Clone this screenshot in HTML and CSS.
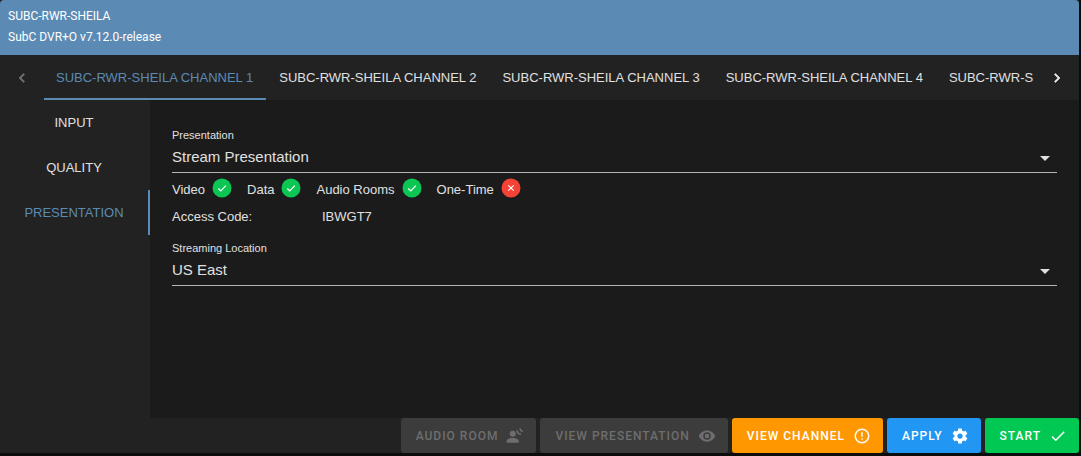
FILE: index.html
```html
<!DOCTYPE html>
<html lang="en">
<head>
<meta charset="utf-8">
<title>SUBC-RWR-SHEILA</title>
<link rel="stylesheet" href="styles.css">
</head>
<body>
<div class="app">
  <header class="header">
    <div>SUBC-RWR-SHEILA</div>
    <div>SubC DVR+O v7.12.0-release</div>
  </header>
  <nav class="channels" aria-label="Channels">
    <button class="arrow" type="button" aria-label="Previous channels" disabled>
      <svg class="icon arrow-icon" viewBox="0 0 24 24"><path d="M15.4 16.6 10.8 12l4.6-4.6L14 6l-6 6 6 6z"/></svg>
    </button>
    <div class="tabs">
      <button class="tab tab-active" type="button">SUBC-RWR-SHEILA CHANNEL 1</button>
      <button class="tab" type="button">SUBC-RWR-SHEILA CHANNEL 2</button>
      <button class="tab" type="button">SUBC-RWR-SHEILA CHANNEL 3</button>
      <button class="tab" type="button">SUBC-RWR-SHEILA CHANNEL 4</button>
      <button class="tab" type="button">SUBC-RWR-S</button>
    </div>
    <button class="arrow" type="button" aria-label="Next channels">
      <svg class="icon arrow-icon" viewBox="0 0 24 24"><path d="M8.6 16.6 13.2 12 8.6 7.4 10 6l6 6-6 6z"/></svg>
    </button>
  </nav>
  <div class="body">
    <nav class="side" aria-label="Sections">
      <button class="side-item" type="button">INPUT</button>
      <button class="side-item" type="button">QUALITY</button>
      <button class="side-item side-active" type="button">PRESENTATION</button>
    </nav>
    <main class="content">
      <div class="field">
        <label class="label" for="presentation">Presentation</label>
        <select class="select" id="presentation"><option>Stream Presentation</option></select>
        <svg class="caret" viewBox="0 0 10 5"><path d="M0 0h10L5 5z"/></svg>
      </div>
      <div class="flags">
        <span class="flag">Video <svg class="badge" viewBox="0 0 20 20"><circle class="yes" cx="10" cy="10" r="9.5"/><path class="mark" d="m6.300 10.500 2.500 2.500 5-5.300"/></svg></span>
        <span class="flag">Data <svg class="badge" viewBox="0 0 20 20"><circle class="yes" cx="10" cy="10" r="9.5"/><path class="mark" d="m6.300 10.500 2.500 2.500 5-5.300"/></svg></span>
        <span class="flag">Audio Rooms <svg class="badge" viewBox="0 0 20 20"><circle class="yes" cx="10" cy="10" r="9.5"/><path class="mark" d="m6.300 10.500 2.500 2.500 5-5.300"/></svg></span>
        <span class="flag">One-Time <svg class="badge" viewBox="0 0 20 20"><circle class="no" cx="10" cy="10" r="9.5"/><path class="mark" d="m7.300 7.300 5.400 5.400m0-5.400-5.400 5.400"/></svg></span>
      </div>
      <div class="code"><span class="code-name">Access Code:</span><span>IBWGT7</span></div>
      <div class="field">
        <label class="label" for="location">Streaming Location</label>
        <select class="select" id="location"><option>US East</option></select>
        <svg class="caret" viewBox="0 0 10 5"><path d="M0 0h10L5 5z"/></svg>
      </div>
    </main>
  </div>
  <footer class="actions">
    <button class="action" type="button" disabled>AUDIO ROOM
      <svg class="icon" viewBox="0 0 24 24"><circle cx="9" cy="9" r="4"/><path d="M1 21v-2.500C1 15.800 5 14.500 9 14.500s8 1.300 8 4V21z"/><path class="wave" d="M14.500 4.500a7 7 0 0 0 5.500 5.500M18.500 2a5 5 0 0 0 4 4"/></svg>
    </button>
    <button class="action" type="button" disabled>VIEW PRESENTATION
      <svg class="icon" viewBox="0 0 24 24"><path d="M12 9a3 3 0 1 0 0 6 3 3 0 0 0 0-6m0 8a5 5 0 1 1 0-10 5 5 0 0 1 0 10m0-12.500C7 4.500 2.730 7.610 1 12c1.730 4.390 6 7.500 11 7.500s9.270-3.110 11-7.500c-1.730-4.390-6-7.500-11-7.500"/></svg>
    </button>
    <button class="action orange" type="button">VIEW CHANNEL
      <svg class="icon" viewBox="0 0 24 24"><path d="M11 15h2v2h-2zm0-8h2v6h-2zm1-5a10 10 0 1 0 0 20 10 10 0 0 0 0-20m0 18a8 8 0 1 1 0-16 8 8 0 0 1 0 16"/></svg>
    </button>
    <button class="action blue" type="button">APPLY
      <svg class="icon" viewBox="0 0 24 24"><path d="M12 15.500A3.500 3.500 0 0 1 8.500 12 3.500 3.500 0 0 1 12 8.500a3.500 3.500 0 0 1 3.500 3.500 3.500 3.500 0 0 1-3.500 3.500m7.430-2.530c.04-.32.070-.64.070-.97s-.03-.66-.07-1l2.110-1.630c.19-.15.240-.42.120-.64l-2-3.460c-.12-.22-.39-.31-.61-.22l-2.490 1c-.52-.39-1.060-.73-1.690-.98l-.37-2.650A.506.506 0 0 0 14 2h-4c-.25 0-.46.180-.5.420l-.37 2.650c-.63.250-1.170.590-1.690.980l-2.490-1c-.22-.09-.49 0-.61.220l-2 3.460c-.13.220-.07.490.120.640L4.570 11c-.04.340-.07.670-.07 1s.03.650.070.970l-2.110 1.660c-.19.150-.25.420-.12.640l2 3.460c.12.220.390.300.610.220l2.490-1.010c.52.400 1.060.740 1.690.990l.37 2.650c.04.240.250.420.500.420h4c.25 0 .460-.18.500-.42l.37-2.650c.63-.26 1.170-.59 1.690-.99l2.490 1.010c.22.080.490 0 .610-.22l2-3.460c.12-.22.070-.49-.12-.64z"/></svg>
    </button>
    <button class="action green" type="button">START
      <svg class="icon" viewBox="0 0 24 24"><path d="M21 7 9 19l-5.500-5.500 1.410-1.410L9 16.170 19.590 5.590z"/></svg>
    </button>
  </footer>
</div>
</body>
</html>
```
FILE: styles.css
```css
* {
  box-sizing: border-box;
}

body {
  margin: 0;
  padding: 0 2px 3px 0;
  min-height: 100vh;
  display: flex;
  background: #0c0c0c;
  color: #e0e0e0;
  font: 13px/20px "Liberation Sans", Arial, sans-serif;
}

button,
select {
  margin: 0;
  padding: 0;
  border: 0;
  border-radius: 0;
  background: none;
  color: inherit;
  font: inherit;
}

.app {
  flex: 1;
  min-width: 0;
  display: flex;
  flex-direction: column;
  background: #222;
}

.header {
  padding: 6px 8px 7px;
  background: #5b8bb4;
  border-radius: 4px 4px 0 0;
  color: #fff;
  font: 12px/21px Roboto, sans-serif;
}

.channels {
  display: flex;
  height: 45px;
}

.arrow {
  flex: 0 0 44px;
  display: flex;
  align-items: center;
  justify-content: center;
}

.arrow:disabled {
  color: #6c6c6c;
}

.icon {
  width: 18px;
  height: 18px;
  fill: currentColor;
}

.arrow-icon {
  stroke: currentColor;
}

.tabs {
  flex: 1;
  min-width: 0;
  display: flex;
  overflow: hidden;
}

.tab {
  flex: none;
  padding: 2px 13px 0 12px;
  border-bottom: 2px solid transparent;
  white-space: nowrap;
}

.tab-active {
  border-color: #5b8bb4;
  color: #5b8bb4;
}

.tab + .tab {
  margin-left: 1px;
}

.body {
  flex: 1;
  display: flex;
}

.side {
  flex: 0 0 150px;
  display: flex;
  flex-direction: column;
}

.side-item {
  height: 45px;
  border-right: 2px solid transparent;
}

.side-active {
  border-color: #5b8bb4;
  color: #5b8bb4;
}

.content {
  flex: 1;
  padding: 25px 22px;
  background: #1b1b1b;
}

.field {
  position: relative;
  display: flex;
  flex-direction: column;
}

.label {
  font-size: 11px;
}

.select {
  appearance: none;
  height: 28px;
  padding-bottom: 3px;
  border-bottom: 1px solid #b4b4b4;
  font-size: 15px;
}

.caret {
  position: absolute;
  right: 7px;
  bottom: 12px;
  width: 10px;
  height: 5px;
  fill: #e0e0e0;
}

.flags {
  display: flex;
  gap: 15px;
  padding-top: 4px;
}

.flag {
  display: flex;
  align-items: center;
  gap: 7px;
  line-height: 26px;
}

.badge {
  width: 20px;
  height: 20px;
  margin-bottom: 4px;
}

.yes {
  fill: #0bc653;
}

.no {
  fill: #f44336;
}

.mark {
  fill: none;
  stroke: #fff;
  stroke-width: 1.2;
}

.code {
  display: flex;
  padding: 2px 0 9px;
  line-height: 24px;
}

.code-name {
  width: 150px;
}

.actions {
  display: flex;
  justify-content: flex-end;
  gap: 4px;
}

.action {
  display: flex;
  align-items: center;
  gap: 8px;
  height: 35px;
  padding: 0 12px 0 15px;
  border-radius: 3px;
  background: #3c3c3c;
  color: #fff;
  font: 500 12px/20px Roboto, sans-serif;
  letter-spacing: 1px;
}

.action:disabled {
  color: #6e6e6e;
}

.orange {
  background: #ff9800;
}

.blue {
  background: #2196f3;
}

.green {
  background: #00c853;
}

.wave {
  fill: none;
  stroke: currentColor;
  stroke-width: 2;
}
```
